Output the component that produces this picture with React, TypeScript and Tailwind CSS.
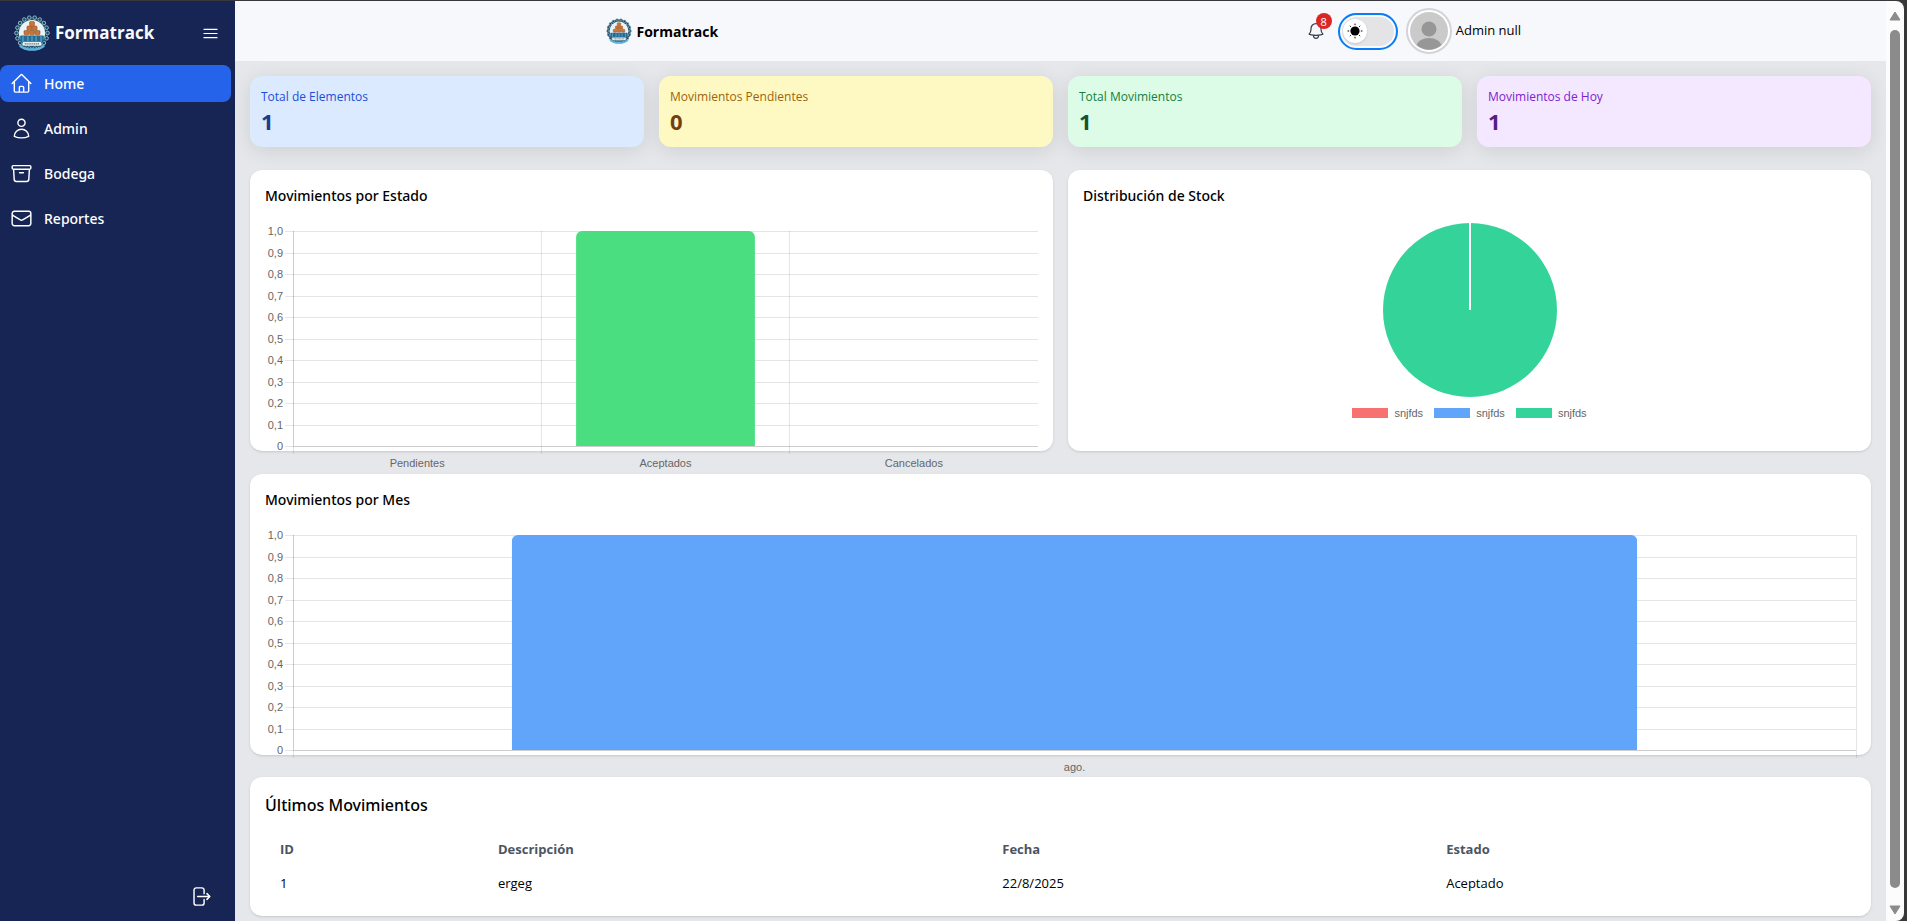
import {
  HiBars3,
  HiOutlineArchiveBox,
  HiOutlineArrowRightOnRectangle,
  HiOutlineBell,
  HiOutlineEnvelope,
  HiOutlineHome,
  HiOutlineUser,
} from "react-icons/hi2";

const NAV = [
  { label: "Home", Icon: HiOutlineHome, active: true },
  { label: "Admin", Icon: HiOutlineUser, active: false },
  { label: "Bodega", Icon: HiOutlineArchiveBox, active: false },
  { label: "Reportes", Icon: HiOutlineEnvelope, active: false },
];

const STATS = [
  { label: "Total de Elementos", value: 1, box: "bg-[#dbeafe]", text: "text-[#1d4ed8]", num: "text-[#1e3a8a]" },
  { label: "Movimientos Pendientes", value: 0, box: "bg-[#fef9c3]", text: "text-[#a16207]", num: "text-[#713f12]" },
  { label: "Total Movimientos", value: 1, box: "bg-[#dcfce7]", text: "text-[#15803d]", num: "text-[#14532d]" },
  { label: "Movimientos de Hoy", value: 1, box: "bg-[#f3e8ff]", text: "text-[#7e22ce]", num: "text-[#581c87]" },
];

const SLICES = [
  { label: "snjfds", color: "bg-[#f87171]" },
  { label: "snjfds", color: "bg-[#60a5fa]" },
  { label: "snjfds", color: "bg-[#34d399]" },
];

function Logo({ className }: { className: string }) {
  const beads = Array.from({ length: 18 }, (_, i) => (i * Math.PI) / 9);
  const crates = [
    [20, 8], [16.8, 13.5], [23.2, 13.5], [13.2, 19], [20, 19], [26.8, 19],
  ];
  return (
    <svg viewBox="0 0 44 44" className={className} aria-hidden="true">
      <circle cx="22" cy="22" r="20" fill="#1b4962" />
      {beads.map((a) => (
        <circle
          key={a}
          cx={22 + 19 * Math.cos(a)}
          cy={22 + 19 * Math.sin(a)}
          r="2.2"
          fill="#1b4962"
          stroke="#a9cbd9"
          strokeWidth="1"
        />
      ))}
      <circle cx="22" cy="22" r="16" fill="#eaf4f8" />
      <path d="M6.5 26h31a16 16 0 0 1-31 0z" fill="#2f87b3" />
      {crates.map(([x, y]) => (
        <rect key={`${x}-${y}`} x={x - 1} y={y} width="6" height="5.2" rx="1.2" fill="#cf7430" stroke="#7a3f1a" strokeWidth="0.6" />
      ))}
      <path d="M8 25h28v9H8z" fill="#236c96" />
      <path d="M11 26v7M17 26v7M22 26v7M27 26v7M33 26v7" stroke="#7cc0de" strokeWidth="1" />
      <path d="M7 37c7 7 23 7 30 0" stroke="#5bb6e0" strokeWidth="3" fill="none" />
      <rect x="10" y="32.5" width="24" height="5.5" rx="2" fill="#f3f6f7" stroke="#2b5b74" strokeWidth="0.8" />
      <path d="M13 35.3h18" stroke="#5c6f78" strokeWidth="1.4" strokeDasharray="1.6 0.7" />
    </svg>
  );
}

type BarChartProps = {
  labels: string[];
  values: number[];
  color: string;
  closed?: boolean;
};

const PLOT_HEIGHT = 215;
const TICKS = Array.from({ length: 11 }, (_, i) => ({
  y: Math.round((i * PLOT_HEIGHT) / 10),
  label: i === 0 ? "1,0" : i === 10 ? "0" : `0,${10 - i}`,
}));

function BarChart({ labels, values, color, closed = false }: BarChartProps) {
  const slot = 100 / labels.length;
  return (
    <svg
      className="block h-60 w-full overflow-visible font-['Liberation_Sans',Arial,sans-serif] text-[11px]"
      role="img"
      aria-label="Gráfico de barras"
    >
      {TICKS.map((t) => (
        <text key={t.label} x="18" y={t.y + 4} textAnchor="end" fill="#666">
          {t.label}
        </text>
      ))}
      <svg x="28" y="0" className="w-[calc(100%-28px)] overflow-visible">
        {TICKS.map((t) => (
          <line
            key={t.label}
            x1="-8"
            x2="100%"
            y1={t.y}
            y2={t.y}
            stroke="#000"
            strokeOpacity={0.1}
            shapeRendering="crispEdges"
          />
        ))}
        {labels.map((label, i) => (
          <g key={label}>
            <line
              x1={`${i * slot}%`}
              x2={`${i * slot}%`}
              y1="0"
              y2={PLOT_HEIGHT + 8}
              stroke="#000"
              strokeOpacity={0.1}
              shapeRendering="crispEdges"
            />
            <text x={`${(i + 0.5) * slot}%`} y={PLOT_HEIGHT + 21} textAnchor="middle" fill="#666">
              {label}
            </text>
          </g>
        ))}
        {closed && (
          <line
            x1="100%"
            x2="100%"
            y1="0"
            y2={PLOT_HEIGHT + 8}
            stroke="#000"
            strokeOpacity={0.1}
            shapeRendering="crispEdges"
          />
        )}
        {values.map((v, i) =>
          v > 0 ? (
            <svg
              key={labels[i]}
              x={`${(i + 0.14) * slot}%`}
              y={PLOT_HEIGHT * (1 - v)}
              width={`${slot * 0.72}%`}
              height={PLOT_HEIGHT * v}
            >
              <rect width="100%" height={PLOT_HEIGHT + 8} rx="6" fill={color} />
            </svg>
          ) : null,
        )}
        <line x1="0" x2="0" y1="0" y2={PLOT_HEIGHT} stroke="#000" strokeOpacity={0.1} shapeRendering="crispEdges" />
        <line
          x1="0"
          x2="100%"
          y1={PLOT_HEIGHT}
          y2={PLOT_HEIGHT}
          stroke="#000"
          strokeOpacity={0.1}
          shapeRendering="crispEdges"
        />
      </svg>
    </svg>
  );
}

const CARD = "h-[281px] rounded-xl bg-white p-[15px] shadow-sm";
const HEADING = "font-['Noto_Sans',sans-serif] text-[14px] font-medium leading-[22px]";

export default function App() {
  return (
    <div className="flex min-h-screen border-t border-[#38383b] bg-[#e5e7eb] font-['Open_Sans','Noto_Sans',sans-serif] text-black">
      <aside className="flex w-[235px] shrink-0 flex-col bg-[#172554] text-white">
        <div className="flex h-16 items-center px-[14px]">
          <Logo className="size-9" />
          <span className="ml-[5px] text-[17px] font-bold text-[#f8fafc]">Formatrack</span>
          <button type="button" aria-label="Menú" className="ml-auto mr-px">
            <HiBars3 className="size-[19px]" />
          </button>
        </div>
        <nav className="flex flex-col gap-2 pr-1">
          {NAV.map(({ label, Icon, active }) => (
            <a
              key={label}
              href="#"
              className={`flex h-[37px] items-center gap-[11px] rounded-lg pl-[10px] font-['Noto_Sans',sans-serif] text-[14px] font-medium ${active ? "bg-[#2563eb]" : ""}`}
            >
              <Icon className="size-[23px]" />
              {label}
            </a>
          ))}
        </nav>
        <button type="button" aria-label="Cerrar sesión" className="mb-[13px] mr-[23px] mt-auto self-end">
          <HiOutlineArrowRightOnRectangle className="size-[23px]" />
        </button>
      </aside>

      <div className="flex min-w-0 flex-1 flex-col">
        <header className="h-[60px] bg-[#f7f8fb]">
          <div className="ml-[22.5%] flex h-full w-[55.4%] items-center justify-between">
            <div className="flex items-center gap-1">
              <Logo className="size-[26px]" />
              <span className="text-[14px] font-bold">Formatrack</span>
            </div>
            <div className="flex items-center gap-2">
              <button type="button" aria-label="Notificaciones" className="relative text-[#374151]">
                <HiOutlineBell className="size-5" />
                <span className="absolute -right-1.5 -top-2 flex size-4 items-center justify-center rounded-full bg-[#dc2626] text-[11px] leading-none text-white">
                  8
                </span>
              </button>
              <button
                type="button"
                role="switch"
                aria-checked="false"
                aria-label="Tema"
                className="ml-1 flex h-[37px] w-[60px] items-center rounded-full border-2 border-[#0a7cf5] bg-[#e4e4e7] p-[3px] ring-2 ring-inset ring-[#f8fafc]"
              >
                <span className="flex size-6 items-center justify-center rounded-full bg-white shadow-sm">
                  <svg viewBox="0 0 16 16" className="size-4" aria-hidden="true">
                    <circle cx="8" cy="8" r="4.6" />
                    <path
                      d="M8 .6v1.6M8 13.8v1.6M.6 8h1.6M13.8 8h1.6M2.8 2.8l1 1M12.2 12.2l1 1M2.8 13.2l1-1M12.2 3.8l1-1"
                      stroke="#000"
                      strokeWidth="1"
                    />
                  </svg>
                </span>
              </button>
              <button type="button" className="flex items-center gap-1 text-[13px]">
                <svg viewBox="0 0 46 46" className="size-[46px]" aria-hidden="true">
                  <circle cx="23" cy="23" r="22" fill="#fff" stroke="#d4d4d8" strokeWidth="2" />
                  <circle cx="23" cy="23" r="19" fill="#cacaca" />
                  <circle cx="23" cy="21" r="7.5" fill="#979797" />
                  <path d="M10.5 37a12.7 8.5 0 0 1 25 0 19 19 0 0 1-25 0z" fill="#979797" />
                </svg>
                Admin null
              </button>
            </div>
          </div>
        </header>

        <main className="flex flex-col p-[15px] pb-1">
          <section className="grid grid-cols-4 gap-[15px]">
            {STATS.map((s) => (
              <div key={s.label} className={`h-[71px] rounded-xl px-[11px] pt-[11px] shadow-[0_4px_20px_rgba(0,0,0,0.1)] ${s.box}`}>
                <p className={`text-[12px] leading-[19px] ${s.text}`}>{s.label}</p>
                <p className={`text-[22px] font-bold leading-[30px] ${s.num}`}>{s.value}</p>
              </div>
            ))}
          </section>

          <section className="mt-[23px] grid grid-cols-2 gap-[15px]">
            <div className={CARD}>
              <h2 className={`mb-6 ${HEADING}`}>Movimientos por Estado</h2>
              <BarChart labels={["Pendientes", "Aceptados", "Cancelados"]} values={[0, 1, 0]} color="#4ade80" />
            </div>
            <div className={CARD}>
              <h2 className={`mb-4 ${HEADING}`}>Distribución de Stock</h2>
              <svg viewBox="0 0 174 174" className="mx-auto size-[174px]" role="img" aria-label="Gráfico circular">
                <circle cx="87" cy="87" r="87" fill="#34d399" />
                <path d="M87 0v87" stroke="#fff" strokeWidth="2" />
              </svg>
              <ul className="mt-[10px] flex justify-center gap-[11px] font-['Liberation_Sans',Arial,sans-serif] text-[11px] leading-3 text-[#666]">
                {SLICES.map((s) => (
                  <li key={s.color} className="flex items-center gap-[6px]">
                    <span className={`h-[10px] w-9 ${s.color}`} />
                    {s.label}
                  </li>
                ))}
              </ul>
            </div>
          </section>

          <section className={`mt-[23px] ${CARD}`}>
            <h2 className={`mb-6 ${HEADING}`}>Movimientos por Mes</h2>
            <BarChart labels={["ago."]} values={[1]} color="#60a5fa" closed />
          </section>

          <section className="mt-[22px] rounded-xl bg-white p-[15px] shadow-sm">
            <h2 className="mb-[15px] font-['Noto_Sans',sans-serif] text-[16px] font-medium leading-[26px]">
              Últimos Movimientos
            </h2>
            <table className="w-full text-left text-[13px]">
              <thead className="text-[#4b5563]">
                <tr className="h-[34px]">
                  <th className="w-[13.7%] px-[15px] font-bold">ID</th>
                  <th className="w-[31.7%] px-[15px] font-bold">Descripción</th>
                  <th className="w-[27.9%] px-[15px] font-bold">Fecha</th>
                  <th className="px-[15px] font-bold">Estado</th>
                </tr>
              </thead>
              <tbody>
                <tr className="h-[34px]">
                  <td className="px-[15px]">1</td>
                  <td className="px-[15px]">ergeg</td>
                  <td className="px-[15px]">22/8/2025</td>
                  <td className="px-[15px]">Aceptado</td>
                </tr>
              </tbody>
            </table>
          </section>
        </main>
      </div>

      <div className="flex w-[21px] shrink-0 bg-[#38383b] pr-[3px]" aria-hidden="true">
        <div className="flex flex-1 flex-col items-center rounded-r-lg bg-[#fcfcfc] pb-[6px] pt-[10px]">
          <svg viewBox="0 0 12 10" className="h-[10px] w-3">
            <path d="M6 1 11 9H1z" fill="#8b8b8b" stroke="#8b8b8b" strokeLinejoin="round" />
          </svg>
          <div className="mb-[17px] mt-[9px] w-[10px] flex-1 rounded-full bg-[#8b8b8b]" />
          <svg viewBox="0 0 12 10" className="h-[10px] w-3">
            <path d="M6 9 1 1h10z" fill="#8b8b8b" stroke="#8b8b8b" strokeLinejoin="round" />
          </svg>
        </div>
      </div>
    </div>
  );
}
